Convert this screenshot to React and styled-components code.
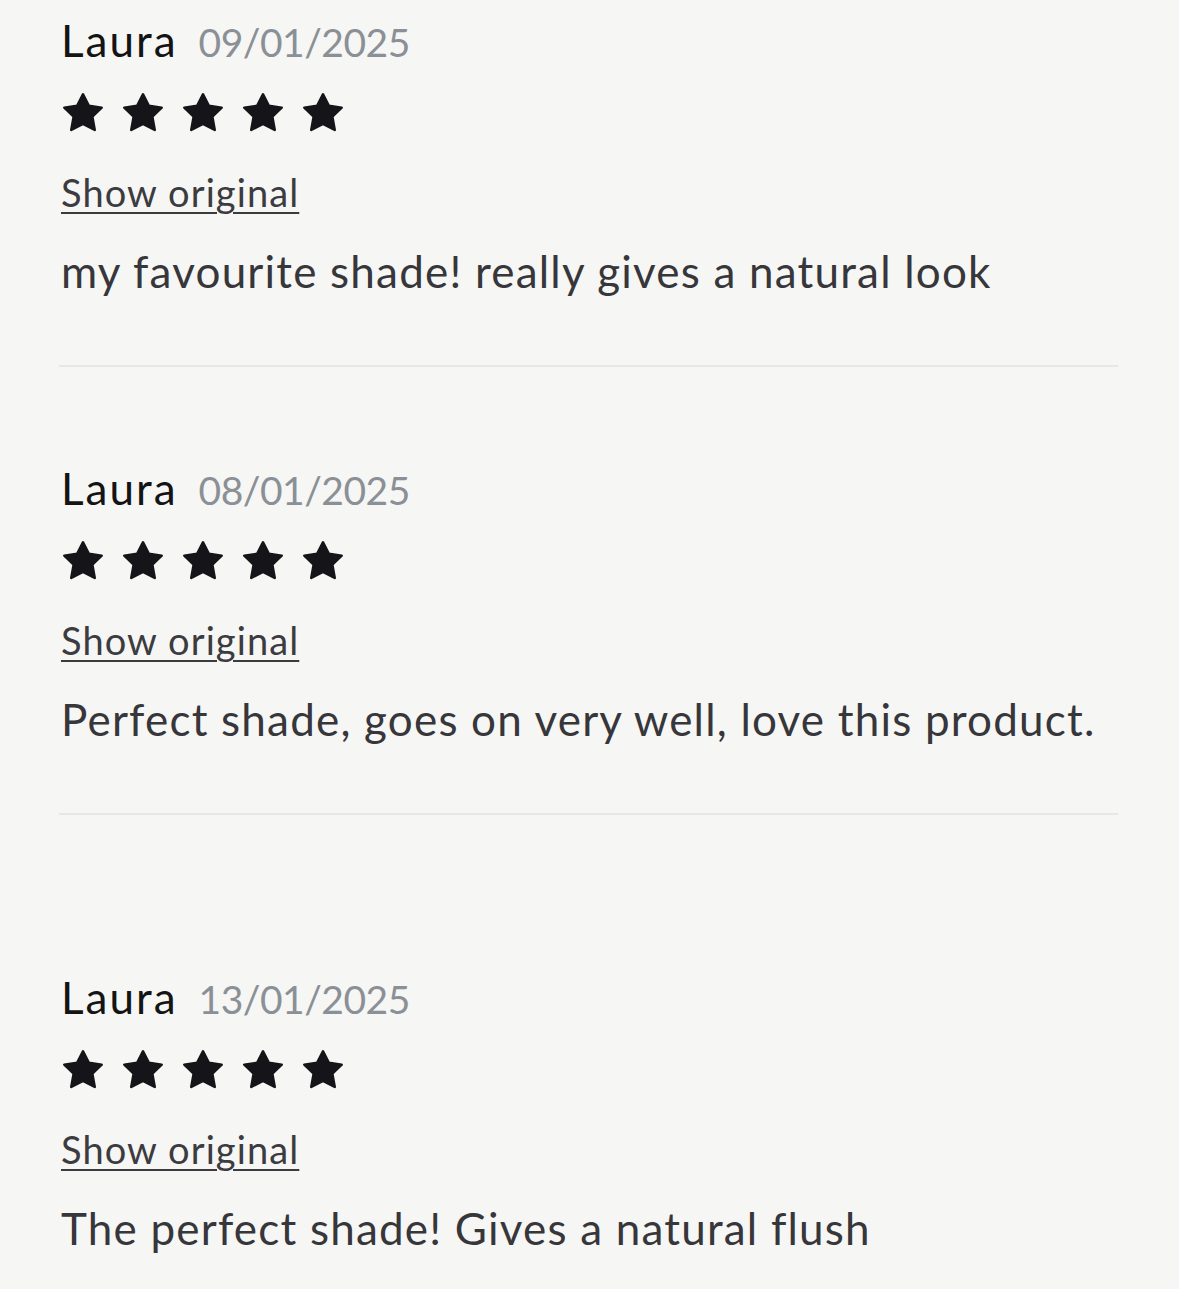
import React from 'react';
import styled, { createGlobalStyle } from 'styled-components';

const GlobalStyle = createGlobalStyle`
  html, body {
    margin: 0;
    padding: 0;
    background: #f6f6f4;
  }
  body {
    font-family: Lato, "Open Sans", sans-serif;
    -webkit-font-smoothing: antialiased;
  }
`

const Page = styled.div`
  padding: 12px 61px 40px 60px;
  box-sizing: border-box;
  width: 1179px;
  min-height: 1289px;
`

const ReviewItem = styled.article`
  display: flex;
  flex-direction: column;
  padding-top: ${p => p.$top}px;
  padding-left: 1px;
`

const Header = styled.div`
  display: flex;
  align-items: baseline;
  gap: 23px;
  height: 56px;
`

const Name = styled.span`
  font-size: 44px;
  line-height: 56px;
  color: #141414;
  letter-spacing: 2px;
  margin-right: -2px;
`

const DateText = styled.span`
  font-size: 39px;
  line-height: 56px;
  color: #8b9096;
  letter-spacing: -0.5px;
`

const Stars = styled.div`
  display: flex;
  gap: 16px;
  margin-top: 23px;
  height: 44px;
`

const ShowOriginal = styled.a`
  align-self: flex-start;
  margin-top: 33px;
  font-size: 38px;
  line-height: 48px;
  color: #3b3b40;
  letter-spacing: 1.1px;
  text-decoration: underline;
  text-decoration-thickness: 2px;
  text-underline-offset: 5px;
  cursor: pointer;
`

const Body = styled.p`
  margin: 27px 0 0;
  font-size: 44px;
  line-height: 56px;
  letter-spacing: 1.2px;
  color: #36363b;
`

const Divider = styled.hr`
  border: none;
  height: 2px;
  background: #e7e7e5;
  margin: 66px 0 0 -1px;
`

const Star = () => (
  <svg width="44" height="44" viewBox="0 0 24 24">
    <polygon
      points="12 1.8 15.2 8.1 22.2 9.1 17.1 14 18.4 21.2 12 17.9 5.6 21.2 6.9 14 1.8 9.1 8.8 8.1"
      fill="#151519"
      stroke="#151519"
      strokeWidth="1.4"
      strokeLinejoin="round"
    />
  </svg>
)

const reviews = [
  { date: '09/01/2025', text: 'my favourite shade! really gives a natural look', top: 0 },
  { date: '08/01/2025', text: 'Perfect shade, goes on very well, love this product.', top: 93 },
  { date: '13/01/2025', text: 'The perfect shade! Gives a natural flush', top: 154, last: true },
]

const App = () => {
  return (
    <Page>
      <GlobalStyle />
      {reviews.map((r, i) => (
        <React.Fragment key={i}>
          <ReviewItem $top={r.top}>
            <Header>
              <Name>Laura</Name>
              <DateText>{r.date}</DateText>
            </Header>
            <Stars>
              {[0, 1, 2, 3, 4].map(s => <Star key={s} />)}
            </Stars>
            <ShowOriginal>Show original</ShowOriginal>
            <Body>{r.text}</Body>
          </ReviewItem>
          {!r.last && <Divider />}
        </React.Fragment>
      ))}
    </Page>
  )
}

export default App
